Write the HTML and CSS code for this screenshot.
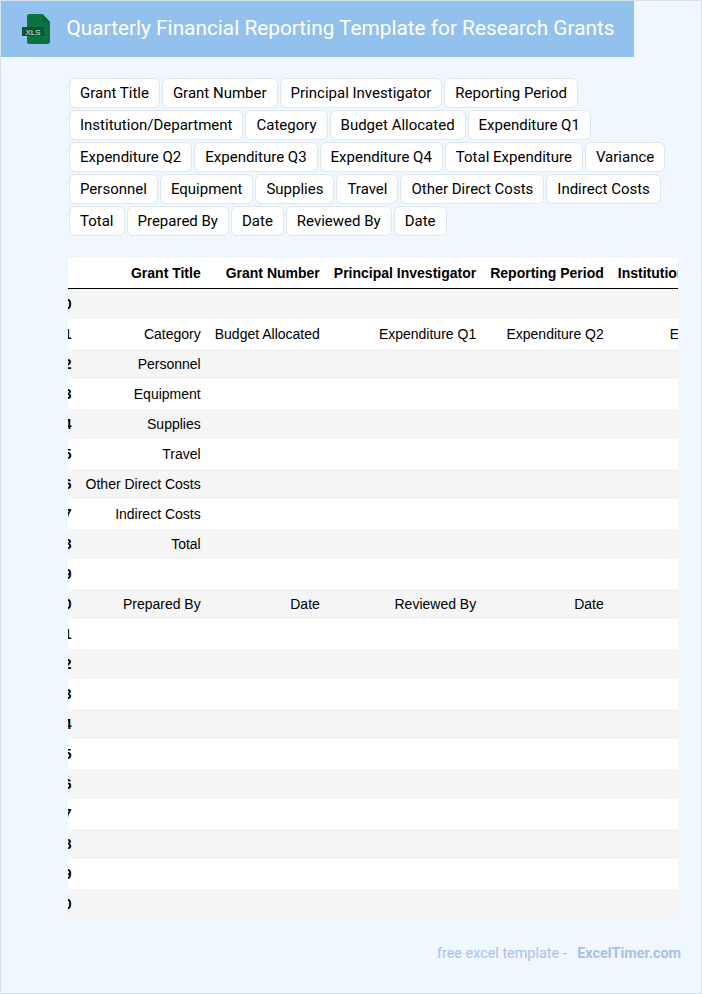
FILE: index.html
```html
<!DOCTYPE html>
<html lang="en">
<head>
<meta charset="utf-8">
<title>Quarterly Financial Reporting Template for Research Grants</title>
<link rel="stylesheet" href="styles.css">
</head>
<body>
<header class="banner">
  <svg class="file-icon" width="30" height="32" viewBox="0 0 30 32" aria-hidden="true">
    <path d="M8 1H20.5L28 9V28.5A2.5 2.5 0 0 1 25.5 31H7.5A2.5 2.5 0 0 1 5 28.5V4A3 3 0 0 1 8 1Z" fill="#0a7440"/>
    <path d="M20.5 1L28 9H22.5A2 2 0 0 1 20.5 7Z" fill="#0a6238"/>
    <rect x="0" y="14" width="22" height="9" fill="#06582f"/>
    <text x="11" y="21.5" class="file-icon-text" text-anchor="middle">XLS</text>
  </svg>
  <h1 class="title">Quarterly Financial Reporting Template for Research Grants</h1>
</header>
<main class="content">
  <ul class="tags">
    <li class="tag">Grant Title</li><li class="tag">Grant Number</li><li class="tag">Principal Investigator</li><li class="tag">Reporting Period</li><li class="tag">Institution/Department</li><li class="tag">Category</li><li class="tag">Budget Allocated</li><li class="tag">Expenditure Q1</li><li class="tag">Expenditure Q2</li><li class="tag">Expenditure Q3</li><li class="tag">Expenditure Q4</li><li class="tag">Total Expenditure</li><li class="tag">Variance</li><li class="tag">Personnel</li><li class="tag">Equipment</li><li class="tag">Supplies</li><li class="tag">Travel</li><li class="tag">Other Direct Costs</li><li class="tag">Indirect Costs</li><li class="tag">Total</li><li class="tag">Prepared By</li><li class="tag">Date</li><li class="tag">Reviewed By</li><li class="tag">Date</li>
  </ul>
  <div class="sheet">
    <table class="grid">
      <thead>
        <tr><th></th><th>Grant Title</th><th>Grant Number</th><th>Principal Investigator</th><th>Reporting Period</th><th>Institution/Department</th></tr>
      </thead>
      <tbody>
        <tr><th>10</th><td></td><td></td><td></td><td></td><td></td></tr>
        <tr><th>11</th><td>Category</td><td>Budget Allocated</td><td>Expenditure Q1</td><td>Expenditure Q2</td><td>Expenditure Q3</td></tr>
        <tr><th>12</th><td>Personnel</td><td></td><td></td><td></td><td></td></tr>
        <tr><th>13</th><td>Equipment</td><td></td><td></td><td></td><td></td></tr>
        <tr><th>14</th><td>Supplies</td><td></td><td></td><td></td><td></td></tr>
        <tr><th>15</th><td>Travel</td><td></td><td></td><td></td><td></td></tr>
        <tr><th>16</th><td>Other Direct Costs</td><td></td><td></td><td></td><td></td></tr>
        <tr><th>17</th><td>Indirect Costs</td><td></td><td></td><td></td><td></td></tr>
        <tr><th>18</th><td>Total</td><td></td><td></td><td></td><td></td></tr>
        <tr><th>19</th><td></td><td></td><td></td><td></td><td></td></tr>
        <tr><th>20</th><td>Prepared By</td><td>Date</td><td>Reviewed By</td><td>Date</td><td></td></tr>
        <tr><th>21</th><td></td><td></td><td></td><td></td><td></td></tr>
        <tr><th>22</th><td></td><td></td><td></td><td></td><td></td></tr>
        <tr><th>23</th><td></td><td></td><td></td><td></td><td></td></tr>
        <tr><th>24</th><td></td><td></td><td></td><td></td><td></td></tr>
        <tr><th>25</th><td></td><td></td><td></td><td></td><td></td></tr>
        <tr><th>26</th><td></td><td></td><td></td><td></td><td></td></tr>
        <tr><th>27</th><td></td><td></td><td></td><td></td><td></td></tr>
        <tr><th>28</th><td></td><td></td><td></td><td></td><td></td></tr>
        <tr><th>29</th><td></td><td></td><td></td><td></td><td></td></tr>
        <tr><th>30</th><td></td><td></td><td></td><td></td><td></td></tr>
      </tbody>
    </table>
  </div>
</main>
<footer class="credit">
  <span class="credit-label">free excel template -</span>
  <strong class="credit-site">ExcelTimer.com</strong>
</footer>
</body>
</html>
```
FILE: styles.css
```css
html, body {
  margin: 0;
  padding: 0;
}
body {
  box-sizing: border-box;
  width: 702px;
  height: 994px;
  overflow: hidden;
  background: #f0f7ff;
  border: 1px solid #d6e2ee;
  font-family: Roboto, sans-serif;
  color: #000;
}
.banner {
  display: inline-flex;
  align-items: center;
  height: 56px;
  padding-left: 21px;
  padding-right: 19.5px;
  background: #93c1ed;
  vertical-align: top;
}
.file-icon {
  flex: none;
  margin-right: 14.5px;
}
.file-icon-text {
  font-family: "Liberation Sans", sans-serif;
  font-size: 8px;
  fill: #dcefe3;
}
.title {
  margin: 0 0 2px;
  font-size: 20.8px;
  font-weight: 400;
  line-height: 28px;
  color: #fff;
  white-space: nowrap;
}
.content {
  margin-left: 67px;
  width: 610px;
}
.tags {
  display: flex;
  flex-wrap: wrap;
  gap: 2px;
  margin: 0;
  padding: 21px 1px 0;
  list-style: none;
}
.tag {
  box-sizing: border-box;
  height: 30px;
  padding: 0 10px;
  background: #fff;
  border: 1px solid #dde6f1;
  border-radius: 6px;
  font-size: 15px;
  line-height: 28px;
  white-space: nowrap;
}
.sheet {
  margin-top: 22px;
  overflow: hidden;
  background: #fff;
}
.grid {
  margin-left: -19px;
  border-collapse: separate;
  border-spacing: 0;
  font-family: "Liberation Sans", Arial, sans-serif;
  font-size: 14px;
  white-space: nowrap;
}
.grid th,
.grid td {
  height: 30px;
  box-sizing: border-box;
  padding: 0 7px;
  text-align: right;
}
.grid thead th {
  border-bottom: 1px solid #000;
  height: 31px;
}
.grid tbody tr:nth-child(odd) {
  background: #f5f5f5;
}
.credit {
  margin-top: 25px;
  padding-right: 20px;
  text-align: right;
  font-size: 14.4px;
  line-height: 20px;
  color: #a9c0ee;
}
.credit-site {
  margin-left: 7px;
  font-weight: 700;
}
```
